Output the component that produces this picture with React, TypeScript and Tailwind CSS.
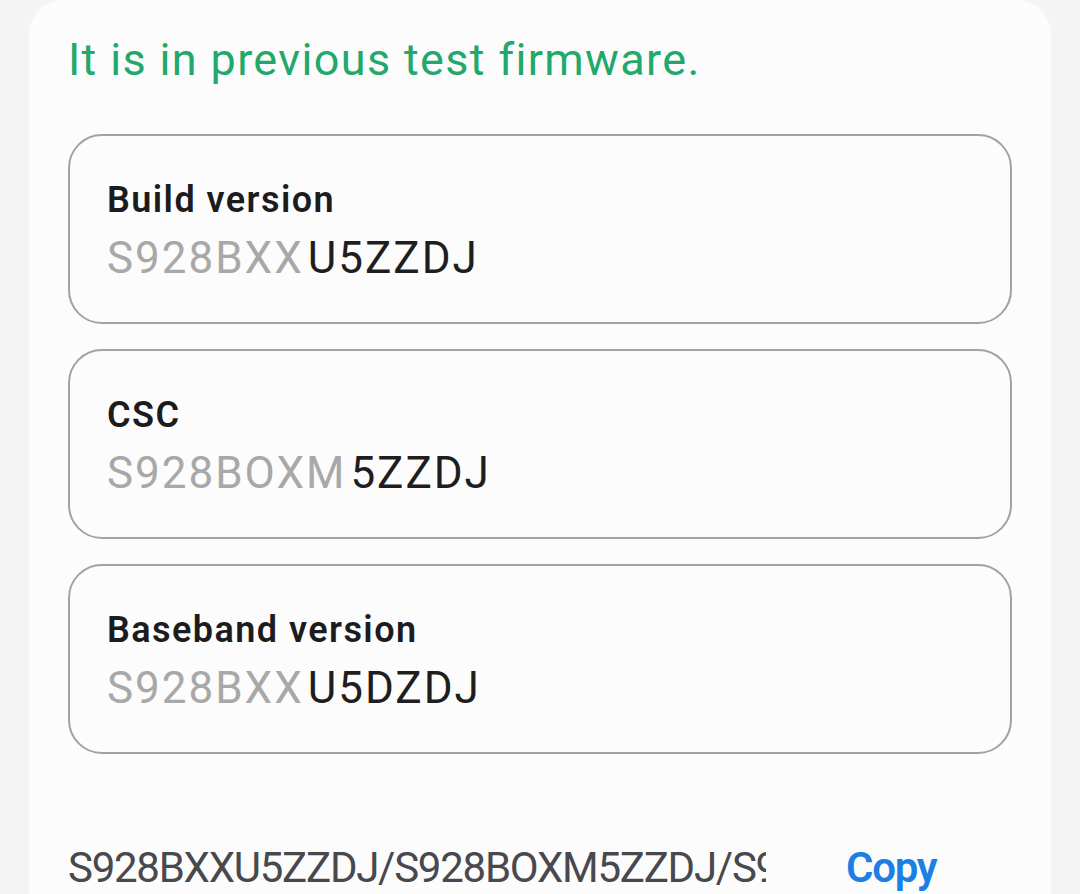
const versions = [
  { label: 'Build version', prefix: 'S928BXX', suffix: 'U5ZZDJ' },
  { label: 'CSC', prefix: 'S928BOXM', suffix: '5ZZDJ' },
  { label: 'Baseband version', prefix: 'S928BXX', suffix: 'U5DZDJ' },
]

function VersionBox({ label, prefix, suffix }: { label: string; prefix: string; suffix: string }) {
  return (
    <div className="h-[190px] rounded-[34px] border-[2.5px] border-[#a2a2a2] pl-[37px] pt-[46px]">
      <div className="text-[36px] leading-none font-semibold tracking-[0.04em] text-[#1c1c1e]">{label}</div>
      <div className="mt-[18px] text-[44px] leading-none tracking-[0.045em] whitespace-nowrap">
        <span className="text-[#a8a8a8]">{prefix}</span>
        <span className="ml-[4px] text-[#1e1e20]">{suffix}</span>
      </div>
    </div>
  )
}

export default function App() {
  return (
    <div
      className="h-[894px] w-[1080px] overflow-hidden bg-[#f4f4f4] px-[29px]"
      style={{ fontFamily: 'Roboto, "Noto Sans", Arial, sans-serif' }}
    >
      <div className="h-[960px] rounded-t-[34px] bg-[#fcfcfc] px-[39px] pt-[37px]">
        <p className="text-[45px] leading-none tracking-[0.03em] text-[#22a86a]">
          It is in previous test firmware.
        </p>

        <div className="mt-[52px] flex flex-col gap-[25px]">
          {versions.map((v) => (
            <VersionBox key={v.label} {...v} />
          ))}
        </div>

        <div className="mt-[93px] flex items-center">
          <div className="w-[698px] shrink-0 overflow-hidden whitespace-nowrap text-[42px] leading-none tracking-[-0.03em] text-[#48484d]">
            S928BXXU5ZZDJ/S928BOXM5ZZDJ/S928BXXU5DZDJ
          </div>
          <button className="ml-[80px] text-[42px] leading-none font-semibold tracking-[-0.03em] text-[#1b7fe3]">
            Copy
          </button>
        </div>
      </div>
    </div>
  )
}
